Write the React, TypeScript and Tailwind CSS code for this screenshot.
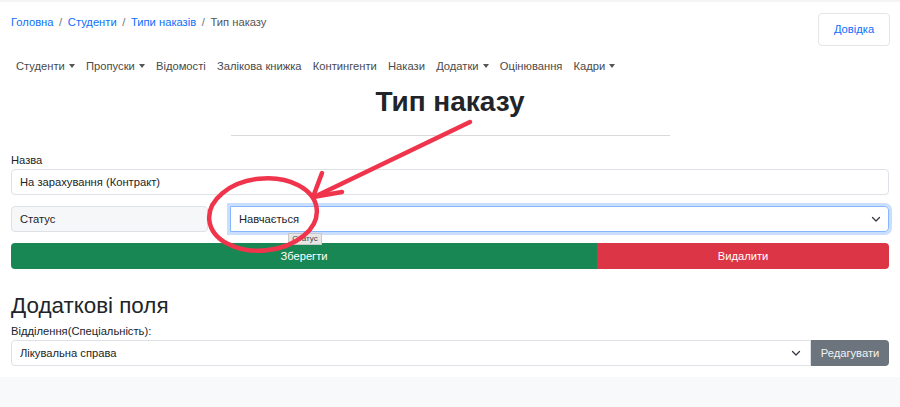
const navItems: { label: string; dropdown: boolean }[] = [
  { label: "Студенти", dropdown: true },
  { label: "Пропуски", dropdown: true },
  { label: "Відомості", dropdown: false },
  { label: "Залікова книжка", dropdown: false },
  { label: "Контингенти", dropdown: false },
  { label: "Накази", dropdown: false },
  { label: "Додатки", dropdown: true },
  { label: "Оцінювання", dropdown: false },
  { label: "Кадри", dropdown: true },
];

function Chevron() {
  return (
    <svg width="10" height="7" viewBox="0 0 10 7" fill="none">
      <path d="M1.5 1.5 5 5l3.5-3.5" stroke="#343a40" strokeWidth="1.3" strokeLinecap="round" strokeLinejoin="round" />
    </svg>
  );
}

function Caret() {
  return (
    <span className="ml-[4px] inline-block h-0 w-0 border-x-[3px] border-t-[4px] border-x-transparent border-t-[#555] align-middle" />
  );
}

export default function App() {
  return (
    <div className="relative min-h-[407px] bg-white font-['Liberation_Sans',Arial,sans-serif] text-[11.2px] text-[#212529]">
      <div className="h-[2px] bg-[#f3f4f5]" />

      <div className="px-[11px]">
        {/* header */}
        <div className="flex items-start justify-between pt-[11px]">
          <nav className="flex items-center leading-[18px]">
            <a className="text-[#0d6efd]">Головна</a>
            <span className="px-[5.6px] text-[#6c757d]">/</span>
            <a className="text-[#0d6efd]">Студенти</a>
            <span className="px-[5.6px] text-[#6c757d]">/</span>
            <a className="text-[#0d6efd]">Типи наказів</a>
            <span className="px-[5.6px] text-[#6c757d]">/</span>
            <span className="text-[#555]">Тип наказу</span>
          </nav>
          <button className="mr-[-1px] h-[33px] w-[72px] rounded-[4px] border border-[#e3e5e8] bg-white text-[11.2px] text-[#0d6efd]">
            Довідка
          </button>
        </div>

        {/* nav */}
        <ul className="mt-[10px] flex leading-[20px] text-[#4a4a4a]">
          {navItems.map((item) => (
            <li key={item.label} className="flex items-center px-[5.6px] first:pl-[5px]">
              {item.label}
              {item.dropdown && <Caret />}
            </li>
          ))}
        </ul>

        <h1 className="mt-[9px] text-center text-[28px] font-bold leading-[34px] text-[#212529]">Тип наказу</h1>
        <div className="mx-auto mt-[16px] h-px w-[439px] bg-[#d9d9d9]" />

        {/* form */}
        <div className="mt-[15px] leading-[18px]">Назва</div>
        <div className="flex h-[26px] items-center rounded-[4px] border border-[#dee2e6] px-[8px]">
          На зарахування (Контракт)
        </div>

        <div className="relative mt-[11px] flex h-[26px]">
          <div className="flex w-[197px] items-center rounded-[4px] border border-[#dee2e6] bg-[#f6f7f8] px-[8px]">
            Статус
          </div>
          <div className="ml-[22px] flex flex-1 items-center justify-between rounded-r-[4px] border border-[#86b7fe] px-[8px] shadow-[0_0_0_3px_rgba(13,110,253,0.22)]">
            <span>Навчається</span>
            <span className="mr-[-1px]">
              <Chevron />
            </span>
          </div>
          <div className="absolute left-[277px] top-[27px] z-10 flex h-[12px] w-[34px] items-center justify-center border border-[#c8c8c8] bg-[#e6e6e6] text-[8px] leading-none text-[#444]">
            Статус
          </div>
        </div>

        <div className="mt-[11px] flex h-[26px] text-white">
          <button className="w-[586px] rounded-l-[4px] bg-[#198754]">Зберегти</button>
          <button className="flex-1 rounded-r-[4px] bg-[#dc3545]">Видалити</button>
        </div>

        <h2 className="mt-[23px] text-[22.4px] font-medium leading-[28px] text-[#212529]">Додаткові поля</h2>
        <div className="mt-[3px] leading-[17px]">Відділення(Спеціальність):</div>
        <div className="flex h-[26px]">
          <div className="flex flex-1 items-center justify-between rounded-l-[4px] border border-[#dee2e6] pl-[8px] pr-[9px]">
            <span>Лікувальна справа</span>
            <Chevron />
          </div>
          <button className="w-[78px] rounded-r-[4px] bg-[#6c757d] text-[#f1f3f5]">Редагувати</button>
        </div>
      </div>

      <div className="mt-[11px] h-[30px] bg-[#f8f9fa]" />

      {/* annotation */}
      <svg className="pointer-events-none absolute inset-0 z-20" width="900" height="407" viewBox="0 0 900 407" fill="none">
        <g stroke="#f0344c" strokeWidth="4.5" strokeLinecap="round" strokeLinejoin="round">
          <path d="M470 122 L314 197" />
          <path d="M322 173 L313 197 L342 192" />
          <ellipse cx="263" cy="214.5" rx="54" ry="36" transform="rotate(-6 263 214.5)" />
        </g>
      </svg>
    </div>
  );
}
